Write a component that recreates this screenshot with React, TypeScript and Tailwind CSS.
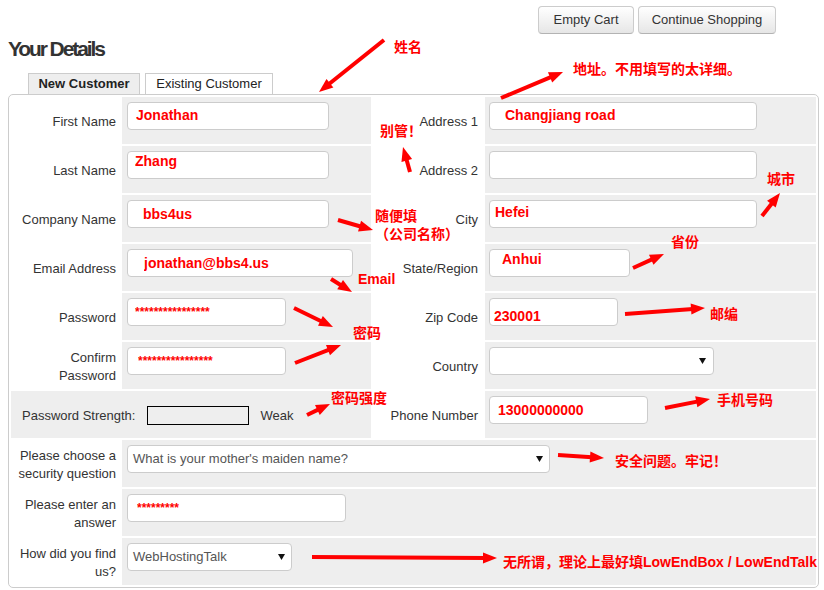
type Arrow = [number, number, number, number];

// red hand-drawn annotation arrows: tail x,y -> head x,y
const arrows: Arrow[] = [
  [384, 40, 319, 92],
  [501, 98, 563, 72],
  [410, 172, 403, 147],
  [338, 220, 373, 230],
  [331, 279, 352, 292],
  [294, 308, 333, 327],
  [295, 363, 341, 345],
  [307, 415, 330, 404],
  [762, 216, 780, 193],
  [633, 268, 664, 254],
  [625, 314, 705, 308],
  [665, 408, 710, 399],
  [558, 455, 604, 458],
  [312, 557, 497, 558],
];

function ArrowMark({ a }: { a: Arrow }) {
  const [x1, y1, x2, y2] = a;
  const len = Math.hypot(x2 - x1, y2 - y1);
  const ux = (x2 - x1) / len;
  const uy = (y2 - y1) / len;
  const nx = -uy;
  const ny = ux;
  const hl = 14;
  const hw = 5.5;
  const bx = x2 - ux * hl;
  const by = y2 - uy * hl;
  return (
    <g>
      <line x1={x1} y1={y1} x2={bx + ux * 2} y2={by + uy * 2} stroke="#ff0000" strokeWidth={4} />
      <polygon
        points={`${x2},${y2} ${bx + nx * hw},${by + ny * hw} ${bx - nx * hw},${by - ny * hw}`}
        fill="#ff0000"
      />
    </g>
  );
}

const label = "flex items-center justify-end pt-[2px] text-right text-[13px] leading-[18px] text-[#333]";
const cellL = "bg-[#eeeeee] pl-[5px] pt-[5px]";
const cellR = "bg-[#eeeeee] pl-[4px] pt-[5px]";
const field =
  "block h-[28px] rounded-[4px] border border-[#cccccc] bg-white font-bold text-[#ff0000] outline-none";

function Select({ text = "", className }: { text?: string; className: string }) {
  return (
    <div
      className={`flex h-[28px] items-center justify-between rounded-[4px] border border-[#cccccc] bg-white pl-[5px] text-[13px] text-[#555] ${className}`}
    >
      <span>{text}</span>
      <svg width="7" height="6" viewBox="0 0 7 6">
        <path d="M0 0h7L3.5 6z" fill="#111" />
      </svg>
    </div>
  );
}

export default function App() {
  return (
    <div className="relative h-[590px] w-[824px] overflow-hidden bg-white font-['Liberation_Sans',Arial,sans-serif] text-[#333]">
      <div className="flex justify-end gap-[4px] pr-[48px] pt-[6px]">
        <button className="h-[28px] w-[96px] rounded-[4px] border border-[#cccccc] border-b-[#b3b3b3] bg-linear-to-b from-white to-[#e6e6e6] text-[13px] text-[#333]">
          Empty Cart
        </button>
        <button className="h-[28px] w-[138px] rounded-[4px] border border-[#cccccc] border-b-[#b3b3b3] bg-linear-to-b from-white to-[#e6e6e6] text-[13px] text-[#333]">
          Continue Shopping
        </button>
      </div>

      <h1 className="ml-[8px] mt-[3px] text-[21px] font-bold leading-[24px] tracking-[-2.1px] text-[#333]">
        Your Details
      </h1>

      <div className="ml-[28px] mt-[12px] flex gap-[5px]">
        <div className="flex h-[21px] w-[112px] items-center justify-center border border-b-0 border-[#cccccc] bg-[#eeeeee] text-[13px] font-bold text-[#222]">
          New Customer
        </div>
        <div className="flex h-[21px] w-[128px] items-center justify-center border border-b-0 border-[#cccccc] bg-white text-[13px] text-[#222]">
          Existing Customer
        </div>
      </div>

      <div className="mx-[8px] w-[811px] rounded-[5px] border border-[#cccccc] p-[2px]">
        <div className="grid auto-rows-[47px] grid-cols-[109px_249px_110px_331px] gap-[2px]">
          <div className={`${label} pr-[4px]`}>First Name</div>
          <div className={cellL}>
            <input readOnly value="Jonathan" className={`${field} w-[202px] pb-[3px] pl-[8px] text-[14px]`} />
          </div>
          <div className={`${label} pr-[5px]`}>Address 1</div>
          <div className={cellR}>
            <input readOnly value="Changjiang road" className={`${field} w-[268px] pb-[3px] pl-[15px] text-[14px]`} />
          </div>

          <div className={`${label} pr-[4px]`}>Last Name</div>
          <div className={cellL}>
            <input readOnly value="Zhang" className={`${field} w-[202px] pb-[8px] pl-[7px] text-[14px]`} />
          </div>
          <div className={`${label} pr-[5px]`}>Address 2</div>
          <div className={cellR}>
            <input readOnly value="" className={`${field} w-[268px]`} />
          </div>

          <div className={`${label} pr-[4px]`}>Company Name</div>
          <div className={cellL}>
            <input readOnly value="bbs4us" className={`${field} w-[202px] pl-[15px] text-[14px]`} />
          </div>
          <div className={`${label} pr-[5px]`}>City</div>
          <div className={cellR}>
            <input readOnly value="Hefei" className={`${field} w-[268px] pb-[4px] pl-[5px] text-[14px]`} />
          </div>

          <div className={`${label} pr-[4px]`}>Email Address</div>
          <div className={cellL}>
            <input readOnly value="jonathan@bbs4.us" className={`${field} w-[226px] pl-[16px] text-[14px]`} />
          </div>
          <div className={`${label} pr-[5px]`}>State/Region</div>
          <div className={cellR}>
            <input readOnly value="Anhui" className={`${field} w-[141px] pb-[8px] pl-[12px] text-[14px]`} />
          </div>

          <div className={`${label} pr-[4px]`}>Password</div>
          <div className={cellL}>
            <input readOnly value="****************" className={`${field} w-[159px] pl-[7px] text-[12px]`} />
          </div>
          <div className={`${label} pr-[5px]`}>Zip Code</div>
          <div className={cellR}>
            <input readOnly value="230001" className={`${field} w-[129px] pl-[4px] pt-[8px] text-[14px]`} />
          </div>

          <div className={`${label} pr-[4px]`}>
            Confirm
            <br />
            Password
          </div>
          <div className={cellL}>
            <input readOnly value="****************" className={`${field} w-[159px] pl-[10px] text-[12px]`} />
          </div>
          <div className={`${label} pr-[5px]`}>Country</div>
          <div className={cellR}>
            <Select className="w-[225px] pr-[7px]" />
          </div>

          <div className="col-span-2 flex items-center bg-[#eeeeee] pl-[11px] pt-[2px] text-[13px] text-[#333]">
            <span>Password Strength:</span>
            <div className="ml-[12px] h-[19px] w-[102px] border border-black" />
            <span className="ml-[11px]">Weak</span>
          </div>
          <div className={`${label} pr-[5px]`}>Phone Number</div>
          <div className={cellR}>
            <input readOnly value="13000000000" className={`${field} w-[159px] pl-[8px] text-[14px]`} />
          </div>

          <div className={`${label} pr-[4px]`}>
            Please choose a
            <br />
            security question
          </div>
          <div className={`${cellL} col-span-3`}>
            <Select text="What is your mother's maiden name?" className="w-[423px] pr-[6px]" />
          </div>

          <div className={`${label} pr-[4px]`}>
            Please enter an
            <br />
            answer
          </div>
          <div className={`${cellL} col-span-3`}>
            <input readOnly value="*********" className={`${field} w-[219px] pl-[9px] text-[12px]`} />
          </div>

          <div className={`${label} pr-[4px]`}>
            How did you find
            <br />
            us?
          </div>
          <div className={`${cellL} col-span-3`}>
            <Select text="WebHostingTalk" className="w-[165px] pr-[6px]" />
          </div>
        </div>
      </div>

      {/* annotations drawn over the screenshot */}
      <svg className="pointer-events-none absolute inset-0" width="824" height="590">
        {arrows.map((a, i) => (
          <ArrowMark key={i} a={a} />
        ))}
      </svg>
      <div className="pointer-events-none absolute inset-0 font-['Liberation_Sans','Noto_Sans_CJK_SC',sans-serif] text-[14px] font-bold leading-[14px] text-[#ff0000]">
        <div className="absolute left-[394px] top-[40px]">姓名</div>
        <div className="absolute left-[573px] top-[62px]">地址。不用填写的太详细。</div>
        <div className="absolute left-[380px] top-[124px]">别管！</div>
        <div className="absolute left-[375px] top-[207px] leading-[18px]">
          随便填
          <br />
          （公司名称）
        </div>
        <div className="absolute left-[358px] top-[272px]">Email</div>
        <div className="absolute left-[353px] top-[326px]">密码</div>
        <div className="absolute left-[767px] top-[172px]">城市</div>
        <div className="absolute left-[671px] top-[235px]">省份</div>
        <div className="absolute left-[710px] top-[307px]">邮编</div>
        <div className="absolute left-[331px] top-[391px]">密码强度</div>
        <div className="absolute left-[717px] top-[393px]">手机号码</div>
        <div className="absolute left-[615px] top-[454px]">安全问题。牢记！</div>
        <div className="absolute left-[503px] top-[555px] whitespace-nowrap">
          无所谓，理论上最好填LowEndBox / LowEndTalk
        </div>
      </div>
    </div>
  );
}
